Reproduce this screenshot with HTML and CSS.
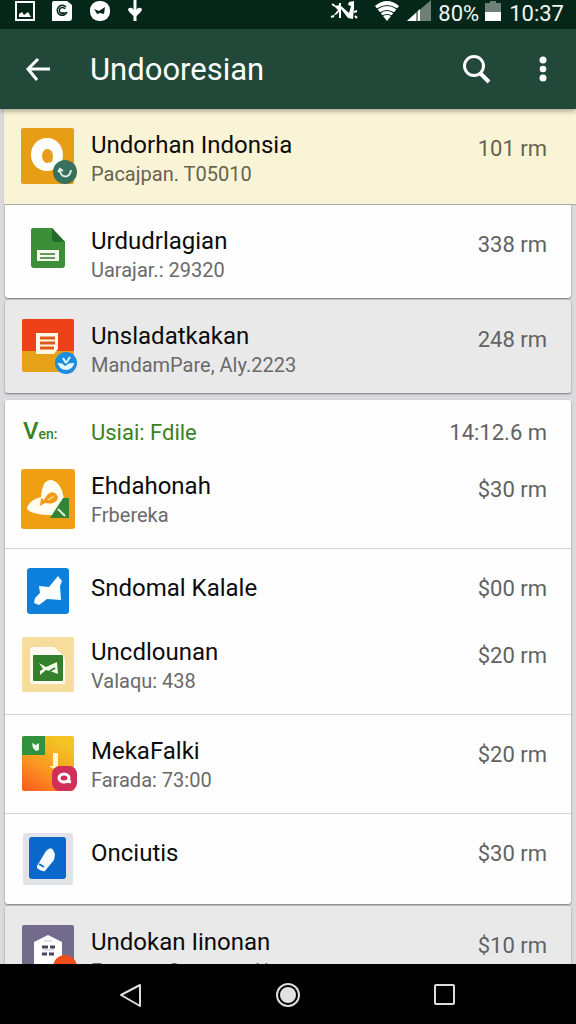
FILE: index.html
```html
<!DOCTYPE html>
<html lang="id">
<head>
    <meta charset="UTF-8">
    <meta name="viewport" content="width=device-width, initial-scale=1.0">
    <title>Undooresian</title>
    <link rel="stylesheet" href="styles.css">
</head>
<body>
    <!-- Status bar -->
    <div class="status-bar">
        <div class="status-left">
            <svg width="20" height="22" viewBox="0 0 20 22"><path d="M1 2h18v18H1z" fill="none" stroke="#fff" stroke-width="2"/><path d="M4 17v-3l3-2 2 3 4-3 3 5z" fill="#fff"/></svg>
            <svg width="22" height="22" viewBox="0 0 22 22"><path d="M3 1h13l5 4v13q0 3-3 3H1V3q0-2 2-2z" fill="#fff"/><path d="M15 7a5 5 0 1 0 1 5M14 9a3 3 0 1 0-1 4h-3" fill="none" stroke="#052719" stroke-width="1.5"/></svg>
            <svg width="22" height="22" viewBox="0 0 22 22"><rect x="1" y="1" width="20" height="20" rx="9" fill="#fff"/><path d="M5 9l5 2 6-4-1 7-4-1-3 1-1-2z" fill="#052719"/></svg>
            <svg width="16" height="22" viewBox="0 0 16 22"><path d="M8 0v21" stroke="#fff" stroke-width="3"/><path d="M1 9q2-2 4-1l3 3 3-3q2-1 4 1 0 3-7 8-7-5-7-8z" fill="#fff"/></svg>
        </div>
        <div class="status-right">
            <svg width="28" height="22" viewBox="0 0 28 22"><path d="M10 5l9 8 2-7-3-1 1-3 5-1v7l-1 11-5-1-7-9-4 5-4 2 5-6-4-4z" fill="#fff"/><path d="M2 4l3 2M1 17l3-1M10 3v15M24 12l3-1M25 16l2 2" fill="none" stroke="#fff" stroke-width="2"/></svg>
            <svg width="26" height="22" viewBox="0 0 26 22"><path d="M1 6q12-10 24 0L13 21z" fill="#fff"/><path d="M3 9q10-7 20 0M6 13q7-5 14 0M8 16q5-3 10 0" fill="none" stroke="#052719" stroke-width="1.2"/></svg>
            <svg width="26" height="22" viewBox="0 0 26 22"><path d="M1 21L25 0v21z" fill="#6d7f76"/><path d="M1 21L14 9v12z" fill="#fff"/><path d="M11 9v12" stroke="#052719"/></svg>
            <span>80%</span>
            <svg width="16" height="22" viewBox="0 0 16 22"><path d="M5 1h6v2h5v18H0V3h5z" fill="#6d7f76"/><path d="M0 12h16v9H0z" fill="#fff"/></svg>
            <span class="clock">10:37</span>
        </div>
    </div>

    <!-- App bar -->
    <header class="app-bar">
        <button class="icon-button" type="button" aria-label="Kembali">
            <svg width="28" height="28" viewBox="0 0 28 28"><path d="M26 14H4M14 4L4 14l9 11" fill="none" stroke="#fff" stroke-width="3"/></svg>
        </button>
        <h1>Undooresian</h1>
        <button class="icon-button" type="button" aria-label="Cari">
            <svg width="30" height="30" viewBox="0 0 30 30"><circle cx="12" cy="12" r="9.5" fill="none" stroke="#fff" stroke-width="3"/><path d="M18 19l9 9" stroke="#fff" stroke-width="4"/></svg>
        </button>
        <button class="icon-button" type="button" aria-label="Menu">
            <svg width="30" height="30" viewBox="0 0 30 30"><g fill="#fff"><circle cx="15" cy="6" r="3.5"/><circle cx="15" cy="15" r="3.3"/><circle cx="15" cy="24" r="3.5"/></g></svg>
        </button>
    </header>

    <main class="list">
        <section class="card highlight">
            <article class="item">
                <svg class="item-icon" viewBox="0 0 56 56">
                    <rect x="0" y="0" width="53" height="56" rx="2" fill="#e89d17"/>
                    <path d="M26 10c10 0 16 8 16 17s-7 16-16 16-16-7-16-16 6-17 16-17zm0 11c-7 1-6 13 0 14l5-1c2-6 1-13-5-13z" fill="#fff" fill-rule="evenodd"/>
                    <circle cx="44" cy="44" r="12" fill="#39705d"/>
                    <path d="M39 42c0 8 10 9 11 0M37 44l2-3 3 2" fill="none" stroke="#dff1e8" stroke-width="2"/>
                </svg>
                <div class="item-text"><h2>Undorhan Indonsia</h2><p>Pacajpan. T05010</p></div>
                <span class="amount">101 rm</span>
            </article>
        </section>

        <section class="card flat">
            <article class="item">
                <svg class="item-icon" viewBox="0 0 56 56">
                    <path d="M12 4h19l13 14v23q0 3-3 3H13q-3 0-3-3V6q0-2 2-2z" fill="#3d8e38"/>
                    <path d="M31 4l13 14H34q-3 0-3-3z" fill="#236b28"/>
                    <rect x="16" y="26" width="22" height="11" fill="#f5fbef"/>
                    <path d="M19 30h15M19 34h15" stroke="#2f7d2e" stroke-width="1.5"/>
                </svg>
                <div class="item-text"><h2>Urdudrlagian</h2><p>Uarajar.: 29320</p></div>
                <span class="amount">338 rm</span>
            </article>
        </section>

        <section class="card grey">
            <article class="item">
                <svg class="item-icon" viewBox="0 0 56 56">
                    <rect x="1" y="0" width="52" height="53" rx="2" fill="#e6a218"/>
                    <path d="M3 0h48q2 0 2 2v30H1V2q0-2 2-2z" fill="#ee4119"/>
                    <path d="M15 14h22v16l-4 5H15z" fill="#fff8e4"/>
                    <path d="M19 19h15M19 24h15M19 29h14" stroke="#df581b" stroke-width="3"/>
                    <circle cx="45" cy="44" r="11" fill="#1c8ee0"/>
                    <path d="M45 44l-3-5M45 44l4-6M38 45q4 0 6 4 3-4 8-4-2 5-7 5t-7-5z" fill="#e4f6ff" stroke="#e4f6ff" stroke-width="2"/>
                </svg>
                <div class="item-text"><h2>Unsladatkakan</h2><p>MandamPare, Aly.2223</p></div>
                <span class="amount">248 rm</span>
            </article>
        </section>

        <section class="card group">
            <div class="group-head">
                <span class="group-mark">V<small>en:</small></span>
                <h2>Usiai: Fdile</h2>
                <span class="amount">14:12.6 m</span>
            </div>
            <article class="item">
                <svg class="item-icon" viewBox="0 0 56 60">
                    <rect x="0" y="0" width="54" height="60" rx="3" fill="#f09f12"/>
                    <path d="M6 40c0-4 5-10 14-12 1-10 3-17 10-17 8 1 12 10 13 20l-4 13q-4 3-10 2c-9 0-20-2-23-6z" fill="#fffdf0"/>
                    <path d="M19 37l1-8 3 2c4-8 10-11 14-3-1 7-9 7-13 6z" fill="#f09a1c"/>
                    <path d="M27 31l6-4" stroke="#ffcc67" stroke-width="2"/>
                    <path d="M48 29v20H29l13-20z" fill="#338434"/>
                    <path d="M37 40l7 7" stroke="#e7f5dd" stroke-width="2"/>
                </svg>
                <div class="item-text"><h2>Ehdahonah</h2><p>Frbereka</p></div>
                <span class="amount">$30 rm</span>
            </article>
            <hr>
            <article class="item single">
                <svg class="item-icon" viewBox="0 0 56 46">
                    <rect x="6" y="0" width="42" height="46" rx="3" fill="#0d80dc"/>
                    <path d="M37 8l4 5-2 5 1 14-14-1-8 6-5-2 1-5 5-5-1-7 10 1z" fill="#fff"/>
                </svg>
                <div class="item-text"><h2>Sndomal Kalale</h2></div>
                <span class="amount">$00 rm</span>
            </article>
            <article class="item">
                <svg class="item-icon" viewBox="0 0 56 56">
                    <rect x="1" y="2" width="52" height="55" rx="2" fill="#f6dc9d"/>
                    <path d="M13 12h20l9 8q2 2 2 5v22q0 2-2 2H13q-4 0-4-3V15q0-3 4-3z" fill="#fffdf2"/>
                    <rect x="12" y="20" width="30" height="26" rx="1" fill="#33812c"/>
                    <path d="M18 28l7 4 11-5 1 12-8-3-4-1-6 5v-4l3-2z" fill="#f1f9e7"/>
                    <path d="M29 36l5-3" stroke="#33812c" stroke-width="2"/>
                </svg>
                <div class="item-text"><h2>Uncdlounan</h2><p>Valaqu: 438</p></div>
                <span class="amount">$20 rm</span>
            </article>
            <hr>
            <article class="item">
                <svg class="item-icon" viewBox="0 0 56 56">
                    <defs><linearGradient id="sunset" x1="0" y1="1" x2=".6" y2="0"><stop offset="0" stop-color="#f8591c"/><stop offset=".5" stop-color="#fb9922"/><stop offset="1" stop-color="#f3c424"/></linearGradient></defs>
                    <rect x="1" y="2" width="52" height="55" rx="2" fill="url(#sunset)"/>
                    <path d="M1 21V4q0-2 2-2h21v19z" fill="#32913f"/>
                    <path d="M11 9l4 2 3-2v7l-3 1-3-3z" fill="#e9fbe7"/>
                    <path d="M32 19h5v13h-1v5l-8-5h4z" fill="#fff5d8"/>
                    <rect x="31" y="32" width="25" height="25" rx="8" fill="#cf2f59"/>
                    <ellipse cx="43" cy="44" rx="5" ry="4" fill="none" stroke="#fff" stroke-width="3"/>
                    <path d="M46 47l4 1" stroke="#fff" stroke-width="3"/>
                </svg>
                <div class="item-text"><h2>MekaFalki</h2><p>Farada: 73:00</p></div>
                <span class="amount">$20 rm</span>
            </article>
            <hr>
            <article class="item single last">
                <svg class="item-icon" viewBox="0 0 56 52">
                    <rect x="2" y="0" width="50" height="52" rx="3" fill="#e1e3e8"/>
                    <rect x="8" y="4" width="37" height="42" rx="3" fill="#0968ca"/>
                    <path d="M16 33l9-15q5-5 7-1l2 4-1 6-9 11q-4 1-8-3z" fill="#f5fbff"/>
                    <path d="M18 31l5 3" stroke="#0968ca" stroke-width="1.5"/>
                </svg>
                <div class="item-text"><h2>Onciutis</h2></div>
                <span class="amount">$30 rm</span>
            </article>
        </section>

        <section class="card grey">
            <article class="item">
                <svg class="item-icon" viewBox="0 0 56 56">
                    <rect x="1" y="0" width="52" height="56" rx="2" fill="#736b8b"/>
                    <path d="M13 17l14-7 14 7v39H13z" fill="#fff"/>
                    <path d="M21 22h6M29 22h5M21 29h5M28 29h5" stroke="#4b465c" stroke-width="3"/>
                    <path d="M23 16h8M22 25h11" stroke="#c3bfd0"/>
                    <circle cx="44" cy="42" r="12" fill="#ee4d1c"/>
                </svg>
                <div class="item-text"><h2>Undokan Iinonan</h2><p>Farupar. Sananan Ala</p></div>
                <span class="amount">$10 rm</span>
            </article>
        </section>
    </main>

    <!-- Android navigation -->
    <nav class="nav-bar">
        <button class="icon-button" type="button" aria-label="Back">
            <svg width="28" height="28" viewBox="0 0 28 28"><path d="M23 4v21L4 14z" fill="none" stroke="#ddd" stroke-width="2" stroke-linejoin="round"/></svg>
        </button>
        <button class="icon-button" type="button" aria-label="Home">
            <svg width="28" height="28" viewBox="0 0 28 28"><circle cx="14" cy="14" r="11" fill="none" stroke="#ddd" stroke-width="2"/><circle cx="14" cy="14" r="8" fill="#e2e2e2"/></svg>
        </button>
        <button class="icon-button" type="button" aria-label="Recent">
            <svg width="28" height="28" viewBox="0 0 28 28"><rect x="4" y="4" width="19" height="19" rx="1" fill="none" stroke="#ddd" stroke-width="2"/></svg>
        </button>
    </nav>
</body>
</html>
```
FILE: styles.css
```css
* {
    box-sizing: border-box;
}

body {
    margin: 0;
    height: 100vh;
    display: flex;
    flex-direction: column;
    background: #dadadc;
    font-family: Roboto, "Liberation Sans", sans-serif;
    color: #0c0c0c;
}

h1, h2, p {
    margin: 0;
    font-weight: 400;
}

svg {
    display: block;
    flex: none;
    overflow: visible;
}

/* Status bar */
.status-bar {
    display: flex;
    justify-content: space-between;
    flex: none;
    height: 29px;
    padding: 0 12px 0 15px;
    background: #042719;
    color: #f2f5f3;
    font-size: 22px;
    line-height: 28px;
}

.status-left {
    display: flex;
    gap: 16px;
}

.status-right {
    display: flex;
    gap: 6px;
}

.status-right svg:first-child {
    margin-right: 10px;
}

.clock {
    margin-left: 2px;
}

/* App bar */
.app-bar {
    display: flex;
    align-items: center;
    flex: none;
    height: 80px;
    padding: 0 18px 0 24px;
    background: #214838;
    color: #fff;
    box-shadow: 0 2px 5px rgba(0, 0, 0, 0.35);
    z-index: 1;
}

.app-bar h1 {
    flex: 1;
    padding-top: 2px;
    margin-left: 38px;
    font-size: 31px;
    line-height: 40px;
}

.app-bar .icon-button:last-child {
    margin-left: 36px;
}

.icon-button {
    padding: 0;
    border: 0;
    background: none;
}

/* List */
.list {
    flex: 1;
    min-height: 0;
    overflow: hidden;
}

.card {
    margin: 0 5px 2px;
    border-radius: 3px;
    background: #fefefe;
    box-shadow: 0 1px 2px rgba(0, 0, 0, 0.45);
}

.highlight {
    margin: 0 0 1px 4px;
    padding: 0 5px 0 1px;
    border-radius: 0;
    background: #faf4d6;
    box-shadow: 0 1px 1px rgba(0, 0, 0, 0.2);
}

.flat {
    border-radius: 0 0 3px 3px;
}

.grey {
    background: #e9e9ea;
}

.group {
    margin-top: 7px;
}

.item {
    display: flex;
    align-items: flex-start;
    padding: 19px 24px 16px 16px;
}

.flat .item, .grey .item {
    padding-bottom: 14px;
}

.group .item {
    padding-bottom: 19px;
}

.item-icon {
    width: 56px;
}

.item-text {
    flex: 1;
    padding: 2px 0 0 14px;
}

.item-text h2 {
    font-size: 24px;
    line-height: 30px;
}

.item-text p {
    color: #6a6a6a;
    font-size: 20px;
    line-height: 28px;
}

.highlight p, .highlight .amount {
    color: #66634f;
}

.amount {
    padding-top: 6px;
    color: #626262;
    font-size: 22px;
    line-height: 30px;
}

.group .single {
    padding-bottom: 2px;
}

.group .last {
    padding-bottom: 19px;
}

.single .item-text {
    padding-top: 5px;
}

.group-head {
    display: flex;
    align-items: center;
    padding: 15px 24px 0 18px;
    color: #3b8126;
}

.group-head h2 {
    flex: 1;
    font-size: 22px;
    line-height: 32px;
}

.group-head .amount {
    padding-top: 0;
}

.group-mark {
    width: 68px;
    font-size: 24px;
    font-weight: 500;
    line-height: 32px;
}

.group-mark small {
    font-size: 14px;
}

hr {
    height: 1px;
    margin: 0;
    border: 0;
    background: #d4d4d4;
}

/* Android navigation */
.nav-bar {
    display: flex;
    justify-content: center;
    align-items: center;
    flex: none;
    gap: 129px;
    height: 60px;
    padding-top: 2px;
    background: #000;
    z-index: 1;
}
```
